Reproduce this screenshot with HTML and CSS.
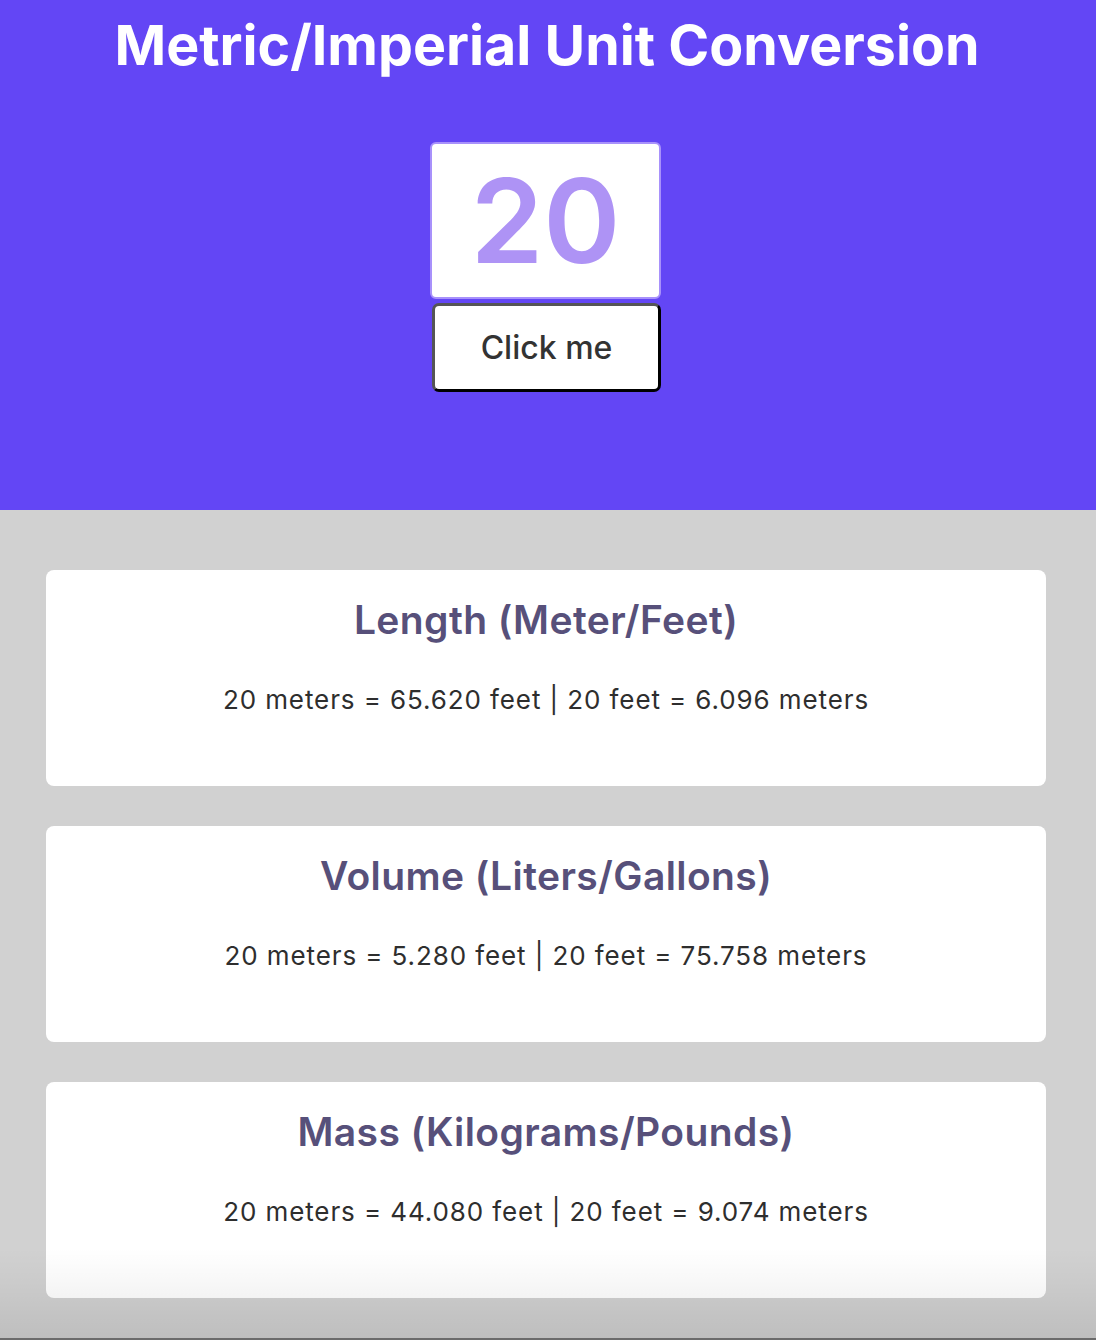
FILE: index.html
```html
<!DOCTYPE html>
<html lang="en">
<head>
<meta charset="utf-8">
<title>Metric/Imperial Unit Conversion</title>
<link rel="stylesheet" href="styles.css">
</head>
<body>
  <header class="hero">
    <h1 class="hero-title">Metric/Imperial Unit Conversion</h1>
    <div class="controls">
      <input class="num-input" type="text" value="20">
      <button class="convert-btn" type="button">Click me</button>
    </div>
  </header>
  <main class="results">
    <section class="card">
      <h2 class="card-title">Length (Meter/Feet)</h2>
      <p class="card-text">20 meters = 65.620 feet | 20 feet = 6.096 meters</p>
    </section>
    <section class="card">
      <h2 class="card-title">Volume (Liters/Gallons)</h2>
      <p class="card-text">20 meters = 5.280 feet | 20 feet = 75.758 meters</p>
    </section>
    <section class="card">
      <h2 class="card-title">Mass (Kilograms/Pounds)</h2>
      <p class="card-text">20 meters = 44.080 feet | 20 feet = 9.074 meters</p>
    </section>
    <div class="shade"></div>
  </main>
  <div class="edge"></div>
</body>
</html>
```

FILE: styles.css
```css
* { box-sizing: border-box; }
html, body {
  margin: 0;
  padding: 0;
}
body {
  font-family: Inter, "Noto Sans", sans-serif;
  background: #d1d1d1;
  height: 1340px;
  overflow: hidden;
}
.hero {
  background: #6346f5;
  height: 510px;
  display: flex;
  flex-direction: column;
  align-items: center;
  padding-top: 12px;
}
.hero-title {
  margin: 0 0 0 -2px;
  color: #ffffff;
  font-size: 55.5px;
  font-weight: 700;
  line-height: 66px;
}
.controls {
  margin-top: 64px;
  margin-right: 5px;
  display: flex;
  flex-direction: column;
  align-items: flex-start;
}
.num-input {
  width: 231px;
  height: 157px;
  border: 2px solid #a891fb;
  border-radius: 6px;
  background: #ffffff;
  color: #ae93f5;
  font-family: Inter, "Noto Sans", sans-serif;
  font-size: 117px;
  font-weight: 600;
  text-align: center;
  padding: 0;
  outline: none;
}
.convert-btn {
  margin-top: 4px;
  margin-left: 2px;
  width: 229px;
  height: 89px;
  background: #ffffff;
  border: 3px solid;
  border-color: #555555 #000000 #000000 #555555;
  border-radius: 7px;
  color: #333333;
  font-family: Inter, "Noto Sans", sans-serif;
  font-size: 32px;
  font-weight: 500;
  padding: 0;
}
.results {
  position: relative;
  padding: 60px 50px 0 46px;
  display: flex;
  flex-direction: column;
  gap: 40px;
  height: 828px;
}
.card {
  background: #ffffff;
  border-radius: 8px;
  height: 216px;
  display: flex;
  flex-direction: column;
  align-items: center;
  padding-top: 27px;
}
.card-title {
  margin: 0;
  color: #57507a;
  font-size: 39px;
  font-weight: 600;
  line-height: 46px;
  letter-spacing: 0.4px;
}
.card-text {
  margin: 42px 0 0;
  color: #2e2e2e;
  font-size: 26px;
  font-weight: 400;
  line-height: 30px;
  letter-spacing: 0.9px;
}
.shade {
  position: absolute;
  left: 0;
  right: 0;
  bottom: 0;
  height: 90px;
  background: linear-gradient(to bottom, rgba(0,0,0,0) 0%, rgba(0,0,0,0.03) 40%, rgba(0,0,0,0.09) 100%);
  pointer-events: none;
}
.edge {
  height: 2px;
  background: #6b6b6b;
}
```
